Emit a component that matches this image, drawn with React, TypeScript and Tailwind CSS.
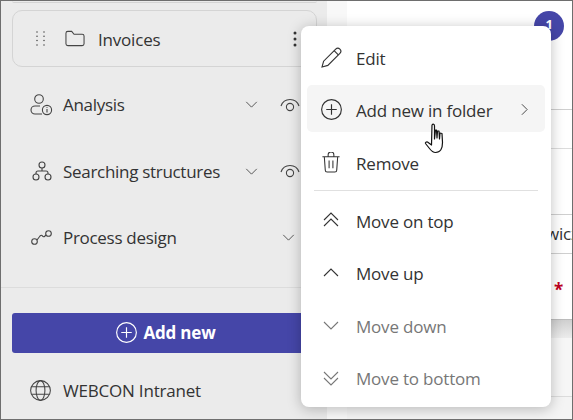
import React from "react";

function NavRow({ icon, label, eye }: { icon: React.ReactNode; label: string; eye?: boolean }) {
  return (
    <div className="flex h-[66.5px] items-center pl-[29px] text-[#333333]">
      <span className="mr-[10px] flex w-[23px] justify-center">{icon}</span>
      <span className="flex-1 text-[17px] tracking-[-0.3px]">{label}</span>
      <svg viewBox="0 0 14 8" className={`h-[7px] w-[13px] text-[#444] ${eye ? "mr-[22px]" : "mr-[32px]"}`} fill="none" stroke="currentColor" strokeWidth="1"><path d="M1 1l6 6 6-6" /></svg>
      {eye && (
        <svg viewBox="0 0 20 14" className="mr-[27px] h-[14px] w-[20px] text-[#444]" fill="none" stroke="currentColor" strokeWidth="1.1"><path d="M1 8a9.5 9.5 0 0 1 18 0" /><circle cx="10" cy="9" r="3.6" /></svg>
      )}
    </div>
  );
}

function MenuItem({ icon, label, hover, muted, chevron, last }: { icon: React.ReactNode; label: string; hover?: boolean; muted?: boolean; chevron?: boolean; last?: boolean }) {
  return (
    <div className={`flex h-[47px] items-center rounded-[5px] pl-[10px] pr-[17px] ${last ? "" : "mb-[5.5px]"} ${hover ? "bg-[#f5f5f5]" : ""} ${muted ? "text-[#777777]" : "text-[#333333]"}`}>
      <span className="mr-[11px] mt-[2px] flex w-[28px] justify-center">{icon}</span>
      <span className="mt-[5px] flex-1 text-[17px]">{label}</span>
      {chevron && <svg viewBox="0 0 8 14" className="mt-[2px] h-[13px] w-[7px] text-[#444]" fill="none" stroke="currentColor" strokeWidth="1.1"><path d="M1 1l6 6-6 6" /></svg>}
    </div>
  );
}

const Chev = ({ d }: { d: string }) => (
  <svg viewBox="0 0 18 18" className="h-[18px] w-[18px]" fill="none" stroke="currentColor" strokeWidth="1.1"><path d={d} /></svg>
);

export default function App() {
  return (
    <div className="relative flex h-[420px] w-[573px] overflow-hidden border border-[#6e6e6e] bg-white font-['Open_Sans','Liberation_Sans',sans-serif] tracking-[-0.2px]">
      <aside className="flex w-[326px] shrink-0 flex-col bg-[#ebebeb]">
        <div className="ml-[11px] mr-[10px] h-[2px] rounded-b-[10px] border-b border-[#d4d4d4]" />
        <div className="ml-[11px] mr-[10px] mt-[7px] flex h-[57px] items-center rounded-[10px] border border-[#d4d4d4] pl-[23px] pr-[19px] text-[#333333]">
          <svg viewBox="0 0 9 15" className="mr-[20px] h-[15px] w-[9px] text-[#444]" fill="currentColor">
            {[1, 5.3, 9.6, 14].map((y) => (
              <g key={y}><circle cx="1" cy={y} r="0.75" /><circle cx="8" cy={y} r="0.75" /></g>
            ))}
          </svg>
          <svg viewBox="0 0 21 17" className="mr-[13px] h-[17px] w-[20px] text-[#444]" fill="none" stroke="currentColor" strokeWidth="1.1"><path d="M1 3a2 2 0 0 1 2-2h4l2.500 3h8.500a2 2 0 0 1 2 2v8a2 2 0 0 1-2 2H3a2 2 0 0 1-2-2z" /></svg>
          <span className="mt-[2px] flex-1 text-[17px]">Invoices</span>
          <svg viewBox="0 0 4 16" className="h-[16px] w-[4px] text-[#333]" fill="currentColor"><circle cx="2" cy="2" r="1.5" /><circle cx="2" cy="8" r="1.5" /><circle cx="2" cy="14" r="1.5" /></svg>
        </div>
        <div className="mt-[4.5px]">
          <NavRow label="Analysis" eye icon={
            <svg viewBox="0 0 23 22" className="h-[22px] w-[23px] text-[#444]" fill="none" stroke="currentColor" strokeWidth="1.1"><circle cx="9" cy="5" r="4.3" /><path d="M10 12H5a4 4 0 0 0 0 8h7" /><circle cx="17" cy="16" r="4.6" /><path d="M17 15v3.5M17 13v.8" /></svg>
          } />
          <NavRow label="Searching structures" eye icon={
            <svg viewBox="0 0 20 20" className="h-[20px] w-[20px] text-[#444]" fill="none" stroke="currentColor" strokeWidth="1.1"><circle cx="10" cy="4" r="3" /><circle cx="4" cy="16" r="3" /><circle cx="16" cy="16" r="3" /><path d="M10 7v3M4 13v-1a2 2 0 0 1 2-2h8a2 2 0 0 1 2 2v1" /></svg>
          } />
          <NavRow label="Process design" icon={
            <svg viewBox="0 0 21 15" className="h-[15px] w-[21px] text-[#444]" fill="none" stroke="currentColor" strokeWidth="1.1"><circle cx="3.5" cy="11.5" r="2.8" /><circle cx="17.5" cy="3.5" r="2.8" /><path d="M6 10l3-4c1-1 2-1 2.500 0s1.500 1 2.500 0l1-1" /></svg>
          } />
        </div>
        <div className="mt-[15.5px] h-px bg-[#dcdcdc]" />
        <div className="ml-[11px] mt-[25px] flex h-[40px] items-center justify-center rounded-[3px] bg-[#4546a8] pr-[7px] font-bold text-white">
          <svg viewBox="0 0 20 20" className="mr-[6px] h-[21px] w-[21px]" fill="none" stroke="currentColor" strokeWidth="1.1"><circle cx="10" cy="10" r="9.4" /><path d="M10 5v10M5 10h10" /></svg>
          <span className="text-[17px]">Add new</span>
        </div>
        <div className="mt-[25px] flex items-center pl-[29px] text-[#333333]">
          <svg viewBox="0 0 20 20" className="mr-[12px] h-[21px] w-[21px] text-[#444]" fill="none" stroke="currentColor" strokeWidth="1"><circle cx="10" cy="10" r="9.4" /><ellipse cx="10" cy="10" rx="4.2" ry="9.4" /><path d="M1.500 6.500h17M1.500 13.500h17" /></svg>
          <span className="text-[17px]">WEBCON Intranet</span>
        </div>
      </aside>
      <div className="w-[20px] shrink-0 bg-[#f8f8f8]" />
      <main className="flex min-w-0 flex-1 flex-col bg-white">
        <div className="h-[108px] shrink-0" />
        <div className="h-[39px] shrink-0 border-t border-[#cfcfcf]" />
        <div className="h-[66px] shrink-0 border-t border-[#dcdcdc]" />
        <div className="flex h-[39px] shrink-0 items-center overflow-hidden whitespace-nowrap border-t border-[#cfcfcf] pl-[199px] text-[17px] text-[#333]">wicz</div>
        <div className="h-[66px] shrink-0 border-t border-[#cfcfcf] pl-[207px] pt-[24px] text-[17px] font-bold leading-[24px] text-[#c00020]">*</div>
        <div className="h-[19px] shrink-0 border-t border-[#bcbcbc] bg-gradient-to-b from-[#d0d0d0] to-[#ececec]" />
        <div className="h-[58px] shrink-0 bg-[#f6f6f6]" />
        <div className="flex-1 border-t border-[#dcdcdc] bg-[#f4f4f4]" />
      </main>
      <div className="absolute left-[533px] top-[10px] flex h-[30px] w-[30px] items-center justify-center rounded-full bg-[#4546a8] pb-[3px] text-[13px] font-bold text-white">1</div>
      <div className="absolute left-[300px] top-[25px] w-[250px] rounded-[8px] bg-white px-[6px] pb-[6.5px] pt-[6.5px] shadow-[0_2px_14px_rgba(0,0,0,0.25)]">
        <MenuItem label="Edit" icon={<svg viewBox="0 0 20 20" className="h-[21px] w-[21px]" fill="none" stroke="currentColor" strokeWidth="1.1"><path d="M1 19l1.500-5.500L14 2a2.500 2.500 0 0 1 4 4L6.500 17.500z" /><path d="M12.500 3.500l4 4" /></svg>} />
        <MenuItem label="Add new in folder" hover chevron icon={<svg viewBox="0 0 20 20" className="h-[21px] w-[21px]" fill="none" stroke="currentColor" strokeWidth="1.1"><circle cx="10" cy="10" r="9.4" /><path d="M10 5v10M5 10h10" /></svg>} />
        <MenuItem label="Remove" icon={<svg viewBox="0 0 20 22" className="h-[21px] w-[20px]" fill="none" stroke="currentColor" strokeWidth="1.1"><path d="M1 5h18M7 5V3a2 2 0 0 1 6 0v2M3 5l1 14a2 2 0 0 0 2 2h8a2 2 0 0 0 2-2l1-14M8 9v8M12 9v8" /></svg>} />
        <div className="mx-[7px] -mt-[0.5px] mb-[5px] h-px bg-[#e0e0e0]" />
        <MenuItem label="Move on top" icon={<Chev d="M2 9l7-7 7 7M2 15l7-7 7 7" />} />
        <MenuItem label="Move up" icon={<Chev d="M2 12l7-7 7 7" />} />
        <MenuItem label="Move down" muted icon={<Chev d="M2 6l7 7 7-7" />} />
        <MenuItem label="Move to bottom" muted last icon={<Chev d="M2 3l7 7 7-7M2 9l7 7 7-7" />} />
      </div>
      <svg viewBox="0 0 24 34" className="absolute left-[422px] top-[122px] h-[34px] w-[26px]" fill="white" stroke="#111" strokeWidth="1.2" strokeLinejoin="round">
        <path d="M8 2c1-1.500 2.500-1 2.500 1v13l1-9 1 0 .5 8 .5-7h1.500l.5 8 .5-6 2 .5.5 9c0 6-2 10-7 10-3 0-4.500-2-6-4l-4-5c-.5-1 1-2 2-1.500l4 3z" />
      </svg>
    </div>
  );
}
